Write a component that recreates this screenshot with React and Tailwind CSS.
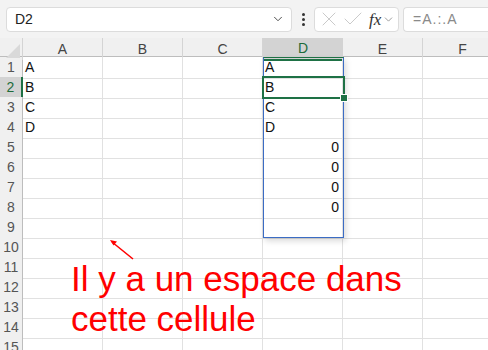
import { ChevronDown, X, Check } from 'lucide-react';

const cols = ['A', 'B', 'C', 'D', 'E', 'F'];
const rows = Array.from({ length: 15 }, (_, i) => i + 1);
const values = { A1: 'A', A2: 'B', A3: 'C', A4: 'D', D1: 'A', D2: 'B', D3: 'C', D4: 'D', D5: 0, D6: 0, D7: 0, D8: 0 };

export default function App() {
  return (
    <div className="w-[488px] h-[350px] overflow-hidden bg-white relative" style={{ fontFamily: '"Liberation Sans", Arial, sans-serif' }}>
      {/* formula bar */}
      <div className="h-[38px] bg-[#f3f3f3] flex items-center pl-[6px] gap-[4px]">
        <div className="w-[286px] h-[25px] bg-white border border-[#dcdcdc] rounded-[4px] flex items-center justify-between pl-[8px] pr-[6px] text-[14px] text-[#222]">
          <span>D2</span>
          <ChevronDown size={14} strokeWidth={1.6} className="text-[#444]" />
        </div>
        <div className="w-[14px] flex flex-col items-center gap-[2px]">
          <span className="w-[3px] h-[3px] bg-[#333] rounded-full" />
          <span className="w-[3px] h-[3px] bg-[#333] rounded-full" />
          <span className="w-[3px] h-[3px] bg-[#333] rounded-full" />
        </div>
        <div className="w-[85px] h-[25px] bg-white border border-[#dcdcdc] rounded-[4px] flex items-center pl-[2px] pr-[2px] gap-[0px] text-[#c4c4c4]">
          <X size={24} strokeWidth={0.9} />
          <Check size={24} strokeWidth={0.9} />
          <span className="ml-[4px] text-[17px] italic text-[#333] leading-none" style={{ fontFamily: '"Liberation Serif", serif' }}>fx</span>
          <ChevronDown size={13} strokeWidth={1.5} className="text-[#888] ml-[1px]" />
        </div>
        <div className="flex-1 h-[25px] bg-white border border-r-0 border-[#dcdcdc] rounded-l-[4px] flex items-center pl-[9px] text-[14px] text-[#8a8a8a] tracking-[1px]">
          =A.:.A
        </div>
      </div>

      {/* column headers */}
      <div className="grid grid-cols-[23px_80px_80px_80px_80px_80px_80px] h-[19px] bg-[#f0f0f0] border-b border-[#bdbdbd] text-[14px] text-[#444]">
        <div className="relative border-r border-[#d4d4d4]">
          <div className="absolute right-[2px] bottom-[2px] w-0 h-0 border-l-[14px] border-l-transparent border-b-[14px] border-b-[#d9d9d9]" />
        </div>
        {cols.map(c => (
          <div
            key={c}
            className={c === 'D'
              ? 'flex items-center justify-center bg-[#d3d3d3] text-[#1d6b3a] border-b-2 border-[#1e7145] -mb-px'
              : 'flex items-center justify-center border-r border-[#d4d4d4]'}
          >
            {c}
          </div>
        ))}
      </div>

      {/* grid */}
      {rows.map(r => (
        <div key={r} className="grid grid-cols-[23px_80px_80px_80px_80px_80px_80px] h-[20px] text-[14px]">
          <div className={r === 2
            ? 'flex items-center justify-center bg-[#d3d3d3] text-[#1d6b3a] border-r-2 border-[#1e7145] border-b border-b-[#d4d4d4]'
            : 'flex items-center justify-center bg-[#f0f0f0] text-[#555] border-r border-[#bdbdbd] border-b border-b-[#d4d4d4]'}>
            {r}
          </div>
          {cols.map(c => {
            const v = values[c + r];
            const isNum = typeof v === 'number';
            return (
              <div key={c} className={`flex items-center border-r border-b border-[#e1e1e1] text-[#111] ${isNum ? 'justify-end pr-[3px]' : 'pl-[2px]'}`}>
                {v}
              </div>
            );
          })}
        </div>
      ))}

      {/* spill range D1:D9 */}
      <div className="absolute left-[263px] top-[57px] w-[81px] h-[181px] border border-[#3b6cc4] border-t-[#1e7145] shadow-[2px_3px_6px_rgba(0,0,0,0.15)] pointer-events-none" />
      {/* active cell D2 */}
      <div className="absolute left-[262px] top-[76px] w-[83px] h-[23px] border-2 border-[#1e7145] pointer-events-none" />
      <div className="absolute left-[340px] top-[94px] w-[6px] h-[6px] bg-[#1e7145] border border-white box-content pointer-events-none" />

      {/* annotation */}
      <svg className="absolute left-0 top-0 pointer-events-none" width="488" height="350">
        <line x1="112" y1="242" x2="133" y2="259" stroke="#ff0000" strokeWidth="1.6" />
        <path d="M110 240 L117 241.5 L113.5 245.5 Z" fill="#ff0000" />
      </svg>
      <div className="absolute left-[71px] top-[259px] text-[35px] leading-[40px] text-[#ff0000] whitespace-nowrap">
        Il y a un espace dans<br />cette cellule
      </div>
    </div>
  );
}
